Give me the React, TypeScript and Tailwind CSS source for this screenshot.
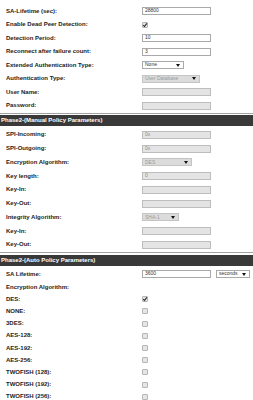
import React from "react";

type Row = {
  label: string;
  kind: "input" | "check" | "select" | "none";
  value?: string;
  disabled?: boolean;
  checked?: boolean;
  w?: string;
};

const phase1: Row[] = [
  { label: "SA-Lifetime (sec):", kind: "input", value: "28800" },
  { label: "Enable Dead Peer Detection:", kind: "check", checked: true },
  { label: "Detection Period:", kind: "input", value: "10" },
  { label: "Reconnect after failure count:", kind: "input", value: "3" },
  { label: "Extended Authentication Type:", kind: "select", value: "None", w: "w-[42px]" },
  { label: "Authentication Type:", kind: "select", value: "User Database", w: "w-[58px]", disabled: true },
  { label: "User Name:", kind: "input", disabled: true },
  { label: "Password:", kind: "input", disabled: true },
];

const manual: Row[] = [
  { label: "SPI-Incoming:", kind: "input", value: "0x", disabled: true },
  { label: "SPI-Outgoing:", kind: "input", value: "0x", disabled: true },
  { label: "Encryption Algorithm:", kind: "select", value: "DES", w: "w-[50px]", disabled: true },
  { label: "Key length:", kind: "input", value: "0", disabled: true },
  { label: "Key-In:", kind: "input", disabled: true },
  { label: "Key-Out:", kind: "input", disabled: true },
  { label: "Integrity Algorithm:", kind: "select", value: "SHA-1", w: "w-[37px]", disabled: true },
  { label: "Key-In:", kind: "input", disabled: true },
  { label: "Key-Out:", kind: "input", disabled: true },
];

const ciphers = [
  "DES:",
  "NONE:",
  "3DES:",
  "AES-128:",
  "AES-192:",
  "AES-256:",
  "TWOFISH (128):",
  "TWOFISH (192):",
  "TWOFISH (256):",
];

const Arrow = () => (
  <svg width="4" height="3" viewBox="0 0 4 3" className="shrink-0">
    <path d="M0 0h4L2 3z" fill="#111" />
  </svg>
);

const CheckBox = ({ checked }: { checked?: boolean }) => (
  <div className="relative h-[6px] w-[6px] rounded-[1px] border border-[#b4b4b4] bg-[#e6e6e6]">
    {checked && (
      <svg
        width="6"
        height="6"
        viewBox="0 0 6 6"
        className="absolute -left-[1px] -top-[1px]"
      >
        <path d="M1.3 3.2 2.5 4.5 4.8 1.4" stroke="#222" strokeWidth="1.1" fill="none" />
      </svg>
    )}
  </div>
);

const Input = ({ value, disabled, w = "w-[69px]" }: { value?: string; disabled?: boolean; w?: string }) => (
  <div
    className={
      disabled
        ? `flex h-[8px] ${w} items-center border border-[#bdbdbd] bg-[#e4e4e4] px-[2px] text-[5px] text-[#8a8a8a]`
        : `flex h-[8px] ${w} items-center border border-[#a9a9a9] bg-white px-[2px] text-[5px] text-[#333]`
    }
  >
    {value}
  </div>
);

const Select = ({ value, disabled, w }: { value?: string; disabled?: boolean; w?: string }) => (
  <div
    className={
      disabled
        ? `flex h-[8px] ${w} items-center justify-between border border-[#c4c4c4] bg-[#dcdcdc] pl-[2px] pr-[3px] text-[5px] text-[#9a9a9a]`
        : `flex h-[8px] ${w} items-center justify-between border border-[#a9a9a9] bg-white pl-[2px] pr-[3px] text-[5px] text-[#333]`
    }
  >
    <span>{value}</span>
    <Arrow />
  </div>
);

const Label = ({ children }: { children: React.ReactNode }) => (
  <div className="w-[142px] pl-[6px] text-[6px] font-bold text-[#1c1c1c]">{children}</div>
);

const FormRow = ({ row, h }: { row: Row; h: string }) => (
  <div className={`flex ${h} items-center`}>
    <Label>{row.label}</Label>
    {row.kind === "input" && <Input value={row.value} disabled={row.disabled} />}
    {row.kind === "check" && <CheckBox checked={row.checked} />}
    {row.kind === "select" && <Select value={row.value} disabled={row.disabled} w={row.w} />}
  </div>
);

const Header = ({ title }: { title: string }) => (
  <div className="pt-[0.5px] pb-[1.7px]">
    <div className="h-[1px] bg-[#a3a3a3]" />
    <div className="mt-[1.5px] flex h-[11px] items-center bg-[#393939] pl-[1px] text-[6px] font-bold text-white">
      {title}
    </div>
  </div>
);

export default function App() {
  return (
    <div
      className="h-[400px] w-[253px] overflow-hidden bg-white pt-[4.3px]"
      style={{ fontFamily: '"Liberation Sans", Arial, sans-serif' }}
    >
      {phase1.map((r, i) => (
        <FormRow key={"p1" + i} row={r} h="h-[13.5px]" />
      ))}
      <Header title="Phase2-(Manual Policy Parameters)" />
      {manual.map((r, i) => (
        <FormRow key={"m" + i} row={r} h="h-[13.75px]" />
      ))}
      <Header title="Phase2-(Auto Policy Parameters)" />
      <div className="flex h-[13.6px] items-center">
        <Label>SA Lifetime:</Label>
        <Input value="3600" />
        <div className="ml-[5px]">
          <Select value="seconds" w="w-[34px]" />
        </div>
      </div>
      <div className="flex h-[12.2px] items-center">
        <Label>Encryption Algorithm:</Label>
      </div>
      {ciphers.map((c, i) => (
        <div key={c} className="flex h-[12.2px] items-center">
          <Label>{c}</Label>
          <CheckBox checked={i === 0} />
        </div>
      ))}
    </div>
  );
}
